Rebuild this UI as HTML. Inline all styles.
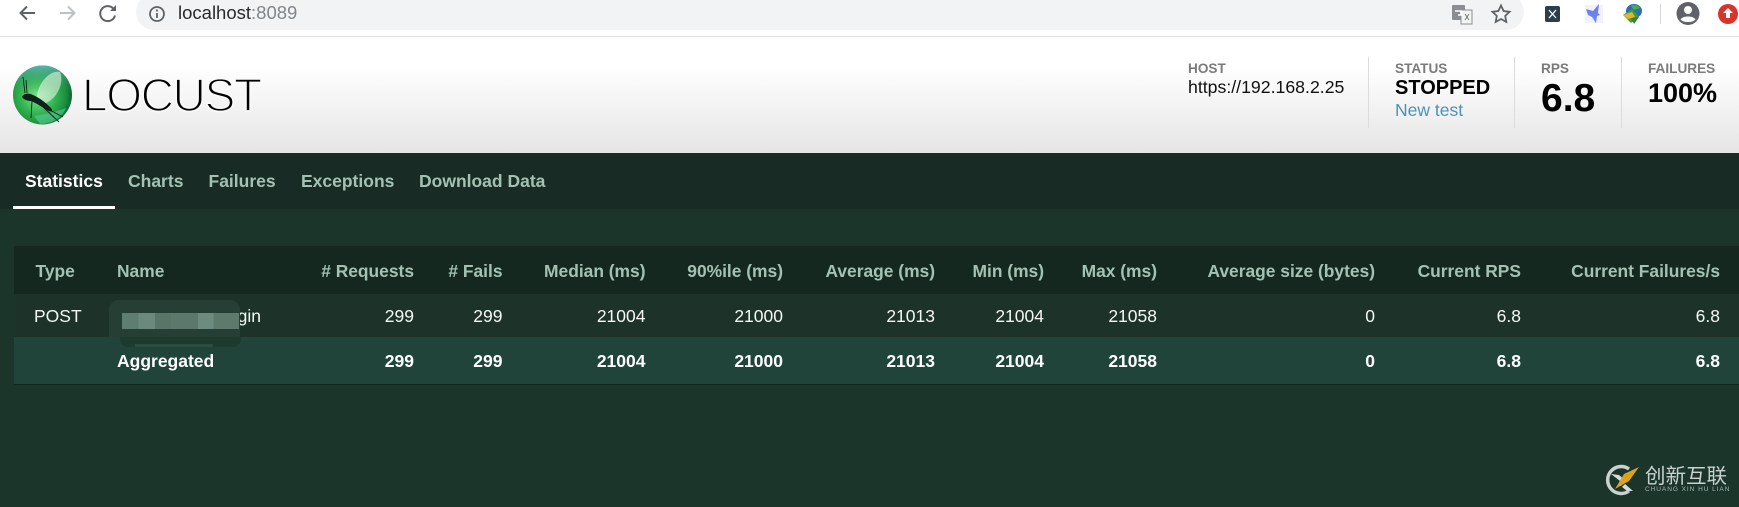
<!DOCTYPE html>
<html><head><meta charset="utf-8"><style>
html,body{margin:0;padding:0}
body{width:1739px;height:507px;position:relative;overflow:hidden;background:#1b352b;font-family:"Liberation Sans",Arial,sans-serif}
.a{position:absolute;white-space:nowrap;line-height:20px}
.th{font-weight:bold;font-size:17.4px;color:#a3c2b3;top:261px}
.r1{font-size:17.5px;color:#f4f7f5;top:306px}
.r2{font-size:17.5px;font-weight:bold;color:#fff;top:351px}
.n{font-weight:bold;font-size:17.5px;color:#a3c2b3;top:171px}
.lab{font-weight:bold;font-size:13.6px;color:#7b7b7b;top:59px}
.sep{position:absolute;top:57px;height:71px;width:1px;background:#dcdcdc}
</style></head><body>
<div class="a" style="left:0;top:0;width:1739px;height:36px;background:#fff;border-bottom:0"></div>
<div class="a" style="left:0;top:36px;width:1739px;height:1px;background:#dfe1e3"></div>
<div class="a" style="left:136px;top:-6px;width:1388px;height:36px;background:#f1f3f4;border-radius:18px"></div>
<svg class="a" style="left:0;top:0" width="320" height="36" fill="none">
<path d="M35 13H21M27 6.500L20.500 13L27 19.500" stroke="#5f6368" stroke-width="2"/>
<path d="M60 13H74M68 6.500L74.500 13L68 19.500" stroke="#bdc1c6" stroke-width="2"/>
<path d="M114 9.500A7.500 7.500 0 1 0 115 15.500" stroke="#5f6368" stroke-width="2"/><path d="M116 5V11H110Z" fill="#5f6368"/>
<circle cx="157" cy="14" r="7" stroke="#5f6368" stroke-width="1.800"/><path d="M157 13V18M157 9.500V11.500" stroke="#5f6368" stroke-width="1.800"/>
</svg>
<div class="a" style="left:178px;top:3px;font-size:18.500px;color:#2a2a2a">localhost<span style="color:#80868b">:8089</span></div>
<svg class="a" style="left:1440px;top:0" width="299" height="36" fill="none">
<rect x="12" y="5" width="13" height="15" rx="1" fill="#8a8e92"/><rect x="21" y="10" width="11" height="14" fill="#f4f5f5" stroke="#8a8e92"/><path d="M15 11h6v4h-3" stroke="#fff" stroke-width="1.600"/><path d="M25 14l4 6M29 14l-4 6" stroke="#777"/>
<path d="M61 5.500l2.600 5.500 6 .8-4.400 4.100 1.100 6-5.300-2.900-5.300 2.900 1.100-6-4.400-4.100 6-.8z" stroke="#5f6368" stroke-width="1.800"/>
<rect x="105" y="6" width="15" height="16" rx="2" fill="#2c3e4c"/><path d="M109 10l7 8M116 10l-7 8" stroke="#fff" stroke-width="1.300"/>
<rect x="145" y="5" width="18" height="18" fill="#f2f2fb"/><path d="M146 9l7 2 6-7-1 9 2 2-3 1-1 7-4-6-4-2z" fill="#6b83ee"/>
<ellipse cx="194" cy="11" rx="8" ry="7" fill="#2a6fb5"/><path d="M191 6c3-2 7-1 9 2l-6 2z" fill="#49b23f"/><path d="M183 15l9-6 7 8-8 6z" fill="#4a9a35"/><path d="M183 15l9-3 3 5-7 2z" fill="#e0b52c"/><path d="M191 18l8-1-5 7z" fill="#2d8a2a"/>
<rect x="220" y="4" width="1" height="20" fill="#d5d7da"/>
<circle cx="248" cy="13.500" r="11.500" fill="#5f6368"/><circle cx="248" cy="10" r="4" fill="#fff"/><path d="M240.500 19.500c2-4 13-4 15 0-3.500 3.500-11.500 3.500-15 0z" fill="#fff"/>
<circle cx="288" cy="14" r="10" fill="#d9342b"/><path d="M288 8l5 5h-3v5h-4v-5h-3z" fill="#fff"/>
</svg>

<div class="a" style="left:0;top:37px;width:1739px;height:116px;background:linear-gradient(#fff 0,#fff 25%,#e5e5e5 100%)"></div>
<svg class="a" style="left:12px;top:65px" width="62" height="60">
<defs>
<radialGradient id="g" cx="42%" cy="52%" r="58%"><stop offset="0" stop-color="#7be58f"/><stop offset=".5" stop-color="#35b551"/><stop offset=".82" stop-color="#1b8f3e"/><stop offset="1" stop-color="#0e6336"/></radialGradient>
<linearGradient id="h" x1="0" y1="0" x2="0" y2="1"><stop offset="0" stop-color="#58b4ae"/><stop offset=".45" stop-color="#3aa858" stop-opacity="0"/></linearGradient>
</defs>
<circle cx="30.500" cy="30" r="29.500" fill="url(#g)"/><circle cx="30.500" cy="30" r="29.500" fill="url(#h)"/>
<path d="M25 30C28 14 40 5 48 7C52 16 47 32 34 38C28 38 25 35 25 30Z" fill="#e8f5e8" opacity=".6"/>
<path d="M28 59C40 59 50 53 54 43C44 47 34 49 22 51Z" fill="#5fd2a0" opacity=".55"/>
<path d="M10 32C12 28 17 28 21 30C28 33 34 38 39 43C42 47 39 47 35 45C30 42 24 38 19 36C16 36 12 35 10 32Z" fill="#10201a"/>
<path d="M13 28L11 12M15 28L14 15M20 36L19 53M30 41L47 57M34 43L51 52" stroke="#10201a" stroke-width=".9" fill="none"/>
</svg>
<div class="a" style="left:82px;top:71px;font-size:46px;line-height:48px;letter-spacing:-1.300px;color:#000;-webkit-text-stroke:1.700px #f9f9f9">LOCUST</div>

<div class="a lab" style="left:1188px">HOST</div>
<div class="a" style="left:1188px;top:77px;font-size:17.700px;color:#111">https://192.168.2.25</div>
<div class="sep" style="left:1368px"></div>
<div class="a lab" style="left:1395px">STATUS</div>
<div class="a" style="left:1395px;top:78px;font-size:20px;font-weight:bold;color:#000">STOPPED</div>
<div class="a" style="left:1395px;top:100px;font-size:17.500px;color:#4a92b8">New test</div>
<div class="sep" style="left:1514px"></div>
<div class="a lab" style="left:1541px">RPS</div>
<div class="a" style="left:1541px;top:89px;font-size:39px;font-weight:bold;color:#000">6.8</div>
<div class="sep" style="left:1621px"></div>
<div class="a lab" style="left:1648px">FAILURES</div>
<div class="a" style="left:1648px;top:83px;font-size:27px;font-weight:bold;color:#000">100%</div>

<div class="a" style="left:0;top:153px;width:1739px;height:56px;background:#182b24"></div>
<div class="a" style="left:13px;top:206px;width:102px;height:3px;background:#fff"></div>
<div class="a n" style="left:25px;color:#fff">Statistics</div>
<div class="a n" style="left:128px">Charts</div>
<div class="a n" style="left:208.500px">Failures</div>
<div class="a n" style="left:301px">Exceptions</div>
<div class="a n" style="left:419px">Download Data</div>

<div class="a" style="left:14px;top:246px;width:1725px;height:48px;background:#15281f"></div>
<div class="a" style="left:15px;top:294px;width:1724px;height:43px;background:#1d3329"></div>
<div class="a" style="left:14px;top:337px;width:1725px;height:47px;background:#20443a"></div>
<div class="a" style="left:14px;top:384px;width:1725px;height:1px;background:#14271e"></div>

<div class="a th" style="left:35.500px">Type</div>
<div class="a th" style="left:117px">Name</div>
<div class="a th" style="right:1325px"># Requests</div>
<div class="a th" style="right:1236.500px"># Fails</div>
<div class="a th" style="right:1093.500px">Median (ms)</div>
<div class="a th" style="right:956px">90%ile (ms)</div>
<div class="a th" style="right:804px">Average (ms)</div>
<div class="a th" style="right:695px">Min (ms)</div>
<div class="a th" style="right:582px">Max (ms)</div>
<div class="a th" style="right:364px">Average size (bytes)</div>
<div class="a th" style="right:218px">Current RPS</div>
<div class="a th" style="right:19px">Current Failures/s</div>

<div class="a r1" style="left:34px">POST</div>
<div class="a r1" style="left:239px;width:22px;overflow:hidden;direction:rtl">login</div>
<div class="a r1" style="right:1325px">299</div>
<div class="a r1" style="right:1236.500px">299</div>
<div class="a r1" style="right:1093.500px">21004</div>
<div class="a r1" style="right:956px">21000</div>
<div class="a r1" style="right:804px">21013</div>
<div class="a r1" style="right:695px">21004</div>
<div class="a r1" style="right:582px">21058</div>
<div class="a r1" style="right:364px">0</div>
<div class="a r1" style="right:218px">6.8</div>
<div class="a r1" style="right:19px">6.8</div>

<div class="a" style="left:109px;top:300px;width:131px;height:37px;background:#263f35;border-radius:10px 10px 0 0"></div>
<div class="a" style="left:120px;top:337px;width:121px;height:10px;background:#1d3a2f;border-radius:0 0 8px 8px"></div>
<div style="position:absolute;left:122px;top:313px;width:117px;height:16px;background:linear-gradient(90deg,#5f7d71 0 14%,#6b8a7d 14% 28%,#587568 28% 42%,#5c786c 42% 65%,#6d8c7f 65% 78%,#5d7a6d 78% 100%)"></div>
<div class="a" style="left:135px;top:344px;width:78px;height:3px;background:#2c4d41"></div>

<div class="a r2" style="left:117px">Aggregated</div>
<div class="a r2" style="right:1325px">299</div>
<div class="a r2" style="right:1236.500px">299</div>
<div class="a r2" style="right:1093.500px">21004</div>
<div class="a r2" style="right:956px">21000</div>
<div class="a r2" style="right:804px">21013</div>
<div class="a r2" style="right:695px">21004</div>
<div class="a r2" style="right:582px">21058</div>
<div class="a r2" style="right:364px">0</div>
<div class="a r2" style="right:218px">6.8</div>
<div class="a r2" style="right:19px">6.8</div>

<svg class="a" style="left:1603px;top:464px" width="38" height="32" fill="none">
<path d="M26 5A13.500 13.500 0 1 0 26 27" stroke="#c9d2cf" stroke-width="3.500"/>
<path d="M8 10l8 1 6 5-4 6-3 0 2-5z" fill="#d5dbd8"/><path d="M36 3L21 10 12 25l14-8z" fill="#d9a321"/><path d="M22 20l8 7h-6l-5-4z" fill="#d5dbd8"/>
</svg>
<div class="a" style="left:1645px;top:466px;font-size:20.500px;line-height:22px;color:#c9d2cf;font-family:'Liberation Sans','Noto Sans CJK SC',sans-serif">创新互联</div>
<div class="a" style="left:1645px;top:486px;font-size:6.500px;line-height:7px;color:#aab5b1;letter-spacing:.95px">CHUANG XIN HU LIAN</div>
</body></html>
